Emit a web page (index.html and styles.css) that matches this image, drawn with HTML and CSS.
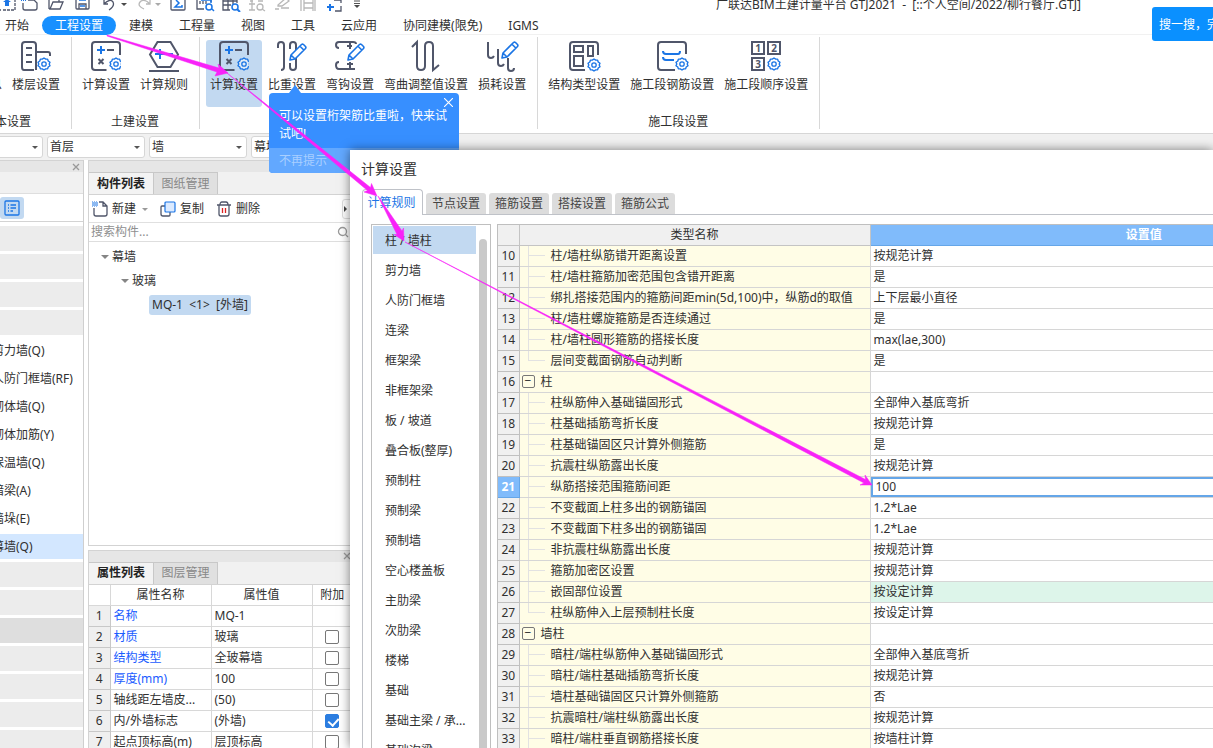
FILE: index.html
```html
<!DOCTYPE html>
<html lang="zh-CN">
<head>
<meta charset="utf-8">
<title>广联达BIM土建计量平台 GTJ2021</title>
<link rel="stylesheet" href="styles.css">
</head>
<body>
<svg class="defs" aria-hidden="true">
  <symbol id="gear" viewBox="-7 -7 14 14"><path d="M0-6 1.7-4.9 3.6-4.9 4.2-3 6-1.7 5.2 0 6 1.7 4.2 3 3.6 4.9 1.7 4.9 0 6-1.7 4.9-3.6 4.9-4.2 3-6 1.7-5.2 0-6-1.7-4.2-3-3.6-4.9-1.7-4.9Z" fill="#fff" fill-opacity=".5" stroke="#1b75e5" stroke-width="1.4" stroke-linejoin="round"/><circle r="2.2" fill="none" stroke="#1b75e5" stroke-width="1.3"/></symbol>
  <symbol id="pencil" viewBox="0 0 18 18"><path d="M1 17 2 12 12.5 1.5Q13.5.7 14.5 1.5L16.5 3.5Q17.3 4.5 16.5 5.5L6 16ZM2 12 6 16M11 3.2 14.8 7" fill="#fff" stroke="#1b75e5" stroke-width="1.6" stroke-linejoin="round"/></symbol>
  <symbol id="calc" viewBox="0 0 30 30"><path d="M15.500 29H4Q1 29 1 26V4Q1 1 4 1H26Q29 1 29 4V14" class="ink"/><path d="M6 9H14M10 5V13" class="blue"/><path d="M16 9H23M7.500 18 12.500 23M12.500 18 7.500 23" class="ink"/><use href="#gear" x="18" y="16" width="14" height="14"/></symbol>
</svg>

<header class="quickbar">
  <div class="quick-icons">
    <button class="q" aria-label="升级"><svg viewBox="0 0 26 12"><path d="M7 0V10H10M12 10H18M16 10H24V0" class="thin" stroke-dasharray="3 1"/><path d="M13 1 17 4H15V8H11V4H9Z" transform="translate(3 -2)" fill="#1b75e5"/></svg></button>
    <button class="q" aria-label="新建文件"><svg viewBox="0 0 26 12"><path d="M6 3V8Q6 10 8 10H18Q20 10 20 8V3L17 0H11" class="thin"/><path d="M4 0H9" stroke="#1b75e5" stroke-width="2" stroke-dasharray="1 1"/></svg></button>
    <button class="q" aria-label="打开"><svg viewBox="0 0 26 12"><path d="M6 9V0M7 9 10 2H20L17 9ZM16 0V2" class="thin"/></svg></button>
    <button class="q" aria-label="保存"><svg viewBox="0 0 26 12"><path d="M7 0V8Q7 9 8 9H19Q20 9 20 8V0M10 9V4H17V9" class="thin"/><path d="M10 0H17M11 6H16" stroke="#1b75e5" stroke-width="1.500"/></svg></button>
    <button class="q undo" aria-label="撤销"><svg viewBox="0 0 37 12"><path d="M9 0V4H13M9 4Q15-2 18 2Q20 6 14 10" class="thin"/><path d="M26 3H32L29 6Z" fill="#4a4a4a"/></svg></button>
    <button class="q redo" aria-label="恢复"><svg viewBox="0 0 33 12"><path d="M18 0V4H14M18 4Q12-2 8 2Q5 6 12 9" class="pale"/><path d="M23 3H29L26 6Z" fill="#aaa"/></svg></button>
    <button class="q" aria-label="汇总计算"><svg viewBox="0 0 26 12"><path d="M6 0V9Q6 10 7 10H19Q20 10 20 9V0" class="thin"/><path d="M11 0 14 3 10 7H17V5" fill="none" stroke="#1b75e5" stroke-width="1.500"/></svg></button>
    <button class="q" aria-label="查看工程量"><svg viewBox="0 0 26 12"><path d="M6 0V9H13M20 0V2M9 1V4M12 1V4M15 1V4" class="thin"/><path d="M10 0H20V3M21 9 23 11" stroke="#1b75e5" fill="none" stroke-width="1.500"/><circle cx="18" cy="7" r="3" class="lens"/></svg></button>
    <button class="q" aria-label="查看计算式"><svg viewBox="0 0 26 12"><path d="M6 0V10H13M6 1H20M6 5H14M11 0V10M16 0V4M20 0V3" class="thin"/><circle cx="18" cy="7" r="3" class="lens"/><path d="M20 9 23 12" class="blue"/></svg></button>
    <button class="q" aria-label="查看钢筋量"><svg viewBox="0 0 26 12"><path d="M6 4H12M9 0V10M6 10H12M15 1H20M7 1H10M19 9 22 11" class="pale"/><circle cx="17" cy="7" r="3" class="pale"/></svg></button>
    <button class="q" aria-label="编辑钢筋"><svg viewBox="0 0 26 12"><path d="M9 5 17-2 20 1 13 6H9ZM6 9H10M12 8H20" class="pale"/></svg></button>
    <button class="q" aria-label="三维"><svg viewBox="0 0 26 12"><path d="M6 0V11M9 0V11M18 0V11M20 0V11M9 3H18M9 8H18" class="pale"/></svg></button>
    <button class="q" aria-label="框选"><svg viewBox="0 0 26 12"><path d="M13 0H20V3M20 6V11H14" class="thin"/><path d="M6 7H13M9 4V11" class="blue"/></svg></button>
    <button class="q more" aria-label="更多"><svg viewBox="0 0 20 12"><path d="M7 1H13M7 3.500H13" stroke="#555"/><path d="M7 5H13L10 8Z" fill="#4a4a4a"/></svg></button>
  </div>
  <h1 class="app-title">广联达BIM土建计量平台 GTJ2021 &nbsp;-&nbsp; [::个人空间/2022/柳行餐厅.GTJ]</h1>
</header>

<nav class="menu">
  <button>开始</button><button class="on">工程设置</button><button>建模</button><button>工程量</button><button>视图</button><button>工具</button><button>云应用</button><button>协同建模(限免)</button><button>IGMS</button>
</nav>
<button class="search-chip">搜一搜，完成</button>

<section class="ribbon">
  <div class="group first">
    <div class="tools"><button class="tool"><svg viewBox="0 0 30 30"></svg>工程信息</button><button class="tool"><svg viewBox="0 0 30 30"><path d="M13 29H3Q1 29 1 26V4Q1 1 4 1H12Q15 1 15 4V29M15 11H27Q29 11 29 13V15M5 7H11M5 14H11M5 21H11" class="ink"/><path d="M16 16H28V30H16Z" fill="#fff"/><use href="#gear" x="16" y="16" width="14" height="14"/></svg>楼层设置</button></div>
    <div class="label">基本设置</div>
  </div>
  <div class="group">
    <div class="tools"><button class="tool"><svg viewBox="0 0 30 30"><use href="#calc"/></svg>计算设置</button><button class="tool"><svg viewBox="0 0 30 30"><path d="M8.500 1H21.500L29 13.500 21.500 26H8.500L1 13.500ZM0 30H30" class="ink"/><path d="M6 13H16M11 8V18M16 13H24" class="blue"/></svg>计算规则</button></div>
    <div class="label">土建设置</div>
  </div>
  <div class="group">
    <div class="tools"><button class="tool on"><svg viewBox="0 0 30 30"><use href="#calc"/></svg>计算设置</button><button class="tool"><svg viewBox="0 0 30 30"><path d="M1 7V4Q1 1 4 1Q7 1 7 4V26Q7 29 4 29M13 8V4Q13 1 16 1Q19 1 19 4V26Q19 29 16 29Q13 29 13 26V22" class="ink"/><use href="#pencil" x="12" y="2" width="18" height="18"/></svg>比重设置</button><button class="tool"><svg viewBox="0 0 30 30"><path d="M4 7Q1 7 1 4Q1 1 4 1H18Q21 1 21 3M15 1V8M12 5H17M4 21Q1 21 1 24Q1 28 4 28H20M15 21V28M12 23H18" class="ink"/><use href="#pencil" x="12" y="2" width="18" height="18"/></svg>弯钩设置</button><button class="tool"><svg viewBox="0 0 30 30"><path d="M1 6 6 1V25Q6 29 10 29Q14 29 14 25V5Q14 1 18 1Q22 1 22 5V29L28 24" class="ink"/></svg>弯曲调整值设置</button><button class="tool"><svg viewBox="0 0 30 30"><path d="M1 1V14Q1 17 4 17Q6 17 7 15M11 8V22Q11 25 14 25Q16 25 17 23M21 17V27Q21 30 24 30Q27 30 27 27" class="ink"/><use href="#pencil" x="14" y="0" width="18" height="18"/></svg>损耗设置</button></div>
  </div>
  <div class="group">
    <div class="tools"><button class="tool"><svg viewBox="0 0 30 30"><path d="M16 29H4Q1 29 1 26V4Q1 1 4 1H26Q29 1 29 4V14M5 5H14V11H5ZM19 5H24V15H19ZM5 15H14V25H5Z" class="ink"/><use href="#gear" x="18" y="17" width="14" height="14"/></svg>结构类型设置</button><button class="tool"><svg viewBox="0 0 30 30"><path d="M18 29H4Q1 29 1 26V4Q1 1 4 1H26Q29 1 29 4V13" class="ink"/><path d="M6 10Q6 13 9 13H21Q23 13 23 10M6 16Q6 19 9 19H17" class="blue"/><use href="#gear" x="18" y="16" width="14" height="14"/></svg>施工段钢筋设置</button><button class="tool"><svg viewBox="0 0 30 30"><path d="M1 1H13V13H1ZM17 1H29V13H17ZM1 17H13V29H1Z" class="ink"/><text x="7" y="11" class="num">1</text><text x="23" y="11" class="num">2</text><text x="7" y="27" class="num">3</text><use href="#gear" x="16" y="16" width="14" height="14"/></svg>施工段顺序设置</button></div>
    <div class="label">施工段设置</div>
  </div>
</section>

<section class="combos">
  <label class="combo"><select aria-label="构件范围"><option></option></select></label>
  <label class="combo"><select aria-label="楼层"><option>首层</option></select></label>
  <label class="combo"><select aria-label="构件大类"><option>墙</option></select></label>
  <label class="combo"><select aria-label="构件类型"><option>幕墙</option></select></label>
</section>

<main class="work">
  <aside class="nav-panel">
    <div class="strip"><button class="x" aria-label="关闭"><svg viewBox="0 0 8 8"><path d="M1 1 7 7M7 1 1 7"/></svg></button></div>
    <div class="nav-head"></div>
    <div class="nav-tools"><button class="view-on" aria-label="列表视图"><svg viewBox="0 0 16 16"><rect x="1" y="1" width="14" height="14" rx="1"/><path d="M4 5H5M6.500 5H12M4 8H5M6.500 8H12M4 11H5M6.500 11H9"/></svg></button></div>
    <div class="nav-list">
      <button class="cat" aria-label="轴线"></button><button class="cat" aria-label="柱"></button><button class="cat" aria-label="墙"></button><button class="cat" aria-label="墙体"></button>
      <button>剪力墙(Q)</button><button>人防门框墙(RF)</button><button>砌体墙(Q)</button><button>砌体加筋(Y)</button><button>保温墙(Q)</button><button>暗梁(A)</button><button>墙垛(E)</button><button class="on">幕墙(Q)</button>
      <button class="cat" aria-label="门窗洞"></button><button class="cat" aria-label="梁"></button><button class="cat dark" aria-label="板"></button><button class="cat" aria-label="空心楼盖"></button><button class="cat" aria-label="楼梯"></button><button class="cat" aria-label="装修"></button><button class="cat" aria-label="土方"></button>
    </div>
  </aside>

  <div class="mid">
    <section class="panel grow">
      <div class="strip"></div>
      <div class="ptabs"><button class="on">构件列表</button><button>图纸管理</button></div>
      <div class="ptools">
        <button><svg viewBox="0 0 16 16"><path d="M2 7V13Q2 15 4 15H13Q15 15 15 13V5L11 1H7M11 1V5H15" class="thin"/><path d="M0 1H5M1 2H6M0 3H5M1 4H6M0 5H5" stroke="#1b75e5" stroke-dasharray="1 1"/></svg>新建<i class="caret"></i></button>
        <button><svg viewBox="0 0 16 16"><path d="M5 5H2Q1 5 1 6V13Q1 15 3 15H9Q10 15 10 14V11" class="thin"/><rect x="5" y="1" width="10" height="10" rx="1" fill="#dbeaff" stroke="#1b75e5" stroke-width="1.200"/></svg>复制</button>
        <button><svg viewBox="0 0 16 16"><path d="M1 4H15M4 4Q4 1 6 1H10Q12 1 12 4M3 4V13Q3 15 5 15H11Q13 15 13 13V4" class="thin"/><path d="M6.500 7V12M9.500 7V12" stroke="#d22" stroke-width="1.300"/></svg>删除</button>
        <button class="next" aria-label="更多"></button>
      </div>
      <div class="psearch"><input type="text" placeholder="搜索构件..." aria-label="搜索构件"><svg viewBox="0 0 12 12"><circle cx="5.500" cy="5.500" r="4"/><path d="M8.500 8.500 11 11"/></svg></div>
      <ul class="tree">
        <li><i class="tri"></i>幕墙</li>
        <li class="l2"><i class="tri"></i>玻璃</li>
        <li class="l3"><span>MQ-1 &nbsp;&lt;1&gt; &nbsp;[外墙]</span></li>
      </ul>
    </section>
    <section class="panel">
      <div class="strip"><button class="x" aria-label="关闭"><svg viewBox="0 0 8 8"><path d="M1 1 7 7M7 1 1 7"/></svg></button></div>
      <div class="ptabs"><button class="on">属性列表</button><button>图层管理</button></div>
      <table class="props">
        <colgroup><col class="c-num"><col class="c-prop"><col class="c-prop"><col></colgroup>
        <tr><th></th><th>属性名称</th><th>属性值</th><th>附加</th></tr>
        <tr><td>1</td><td class="link">名称</td><td>MQ-1</td><td></td></tr>
        <tr><td>2</td><td class="link">材质</td><td>玻璃</td><td><input type="checkbox" aria-label="附加材质"></td></tr>
        <tr><td>3</td><td class="link">结构类型</td><td>全玻幕墙</td><td><input type="checkbox" aria-label="附加结构类型"></td></tr>
        <tr><td>4</td><td class="link">厚度(mm)</td><td>100</td><td><input type="checkbox" aria-label="附加厚度"></td></tr>
        <tr><td>5</td><td>轴线距左墙皮...</td><td>(50)</td><td><input type="checkbox" aria-label="附加轴线距"></td></tr>
        <tr><td>6</td><td>内/外墙标志</td><td>(外墙)</td><td><input type="checkbox" checked aria-label="附加标志"></td></tr>
        <tr><td>7</td><td>起点顶标高(m)</td><td>层顶标高</td><td><input type="checkbox" aria-label="附加标高"></td></tr>
      </table>
    </section>
  </div>
</main>

<div class="tip" role="status">
  <button class="tip-x" aria-label="关闭提示"><svg viewBox="0 0 8 8"><path d="M0 0 8 8M8 0 0 8"/></svg></button>
  <p>可以设置桁架筋比重啦，快来试试吧!</p>
  <button class="tip-no">不再提示</button>
</div>

<section class="dialog" role="dialog" aria-label="计算设置">
  <h2>计算设置</h2>
  <div class="dtabs"><button class="on">计算规则</button><button>节点设置</button><button>箍筋设置</button><button>搭接设置</button><button>箍筋公式</button></div>
  <div class="pane">
    <div class="kinds">
      <div class="kind-list"><button class="on">柱 / 墙柱</button><button>剪力墙</button><button>人防门框墙</button><button>连梁</button><button>框架梁</button><button>非框架梁</button><button>板 / 坡道</button><button>叠合板(整厚)</button><button>预制柱</button><button>预制梁</button><button>预制墙</button><button>空心楼盖板</button><button>主肋梁</button><button>次肋梁</button><button>楼梯</button><button>基础</button><button>基础主梁 / 承...</button><button>基础次梁</button></div>
      <div class="bar"></div>
    </div>
    <div class="sheet">
      <table class="rules">
        <colgroup><col class="r-num"><col class="r-name"><col class="r-val"></colgroup>
        <tr><th></th><th>类型名称</th><th class="hot">设置值</th></tr>
        <tr><td>10</td><td>柱/墙柱纵筋错开距离设置</td><td>按规范计算</td></tr>
        <tr><td>11</td><td>柱/墙柱箍筋加密范围包含错开距离</td><td>是</td></tr>
        <tr><td>12</td><td>绑扎搭接范围内的箍筋间距min(5d,100)中，纵筋d的取值</td><td>上下层最小直径</td></tr>
        <tr><td>13</td><td>柱/墙柱螺旋箍筋是否连续通过</td><td>是</td></tr>
        <tr><td>14</td><td>柱/墙柱圆形箍筋的搭接长度</td><td>max(lae,300)</td></tr>
        <tr class="last"><td>15</td><td>层间变截面钢筋自动判断</td><td>是</td></tr>
        <tr class="head"><td>16</td><td><button aria-label="折叠">−</button>柱</td><td></td></tr>
        <tr><td>17</td><td>柱纵筋伸入基础锚固形式</td><td>全部伸入基底弯折</td></tr>
        <tr><td>18</td><td>柱基础插筋弯折长度</td><td>按规范计算</td></tr>
        <tr><td>19</td><td>柱基础锚固区只计算外侧箍筋</td><td>是</td></tr>
        <tr><td>20</td><td>抗震柱纵筋露出长度</td><td>按规范计算</td></tr>
        <tr class="edit"><td>21</td><td>纵筋搭接范围箍筋间距</td><td><input type="text" value="100" aria-label="纵筋搭接范围箍筋间距"></td></tr>
        <tr><td>22</td><td>不变截面上柱多出的钢筋锚固</td><td>1.2*Lae</td></tr>
        <tr><td>23</td><td>不变截面下柱多出的钢筋锚固</td><td>1.2*Lae</td></tr>
        <tr><td>24</td><td>非抗震柱纵筋露出长度</td><td>按规范计算</td></tr>
        <tr><td>25</td><td>箍筋加密区设置</td><td>按规范计算</td></tr>
        <tr><td>26</td><td>嵌固部位设置</td><td class="green">按设定计算</td></tr>
        <tr class="last"><td>27</td><td>柱纵筋伸入上层预制柱长度</td><td>按设定计算</td></tr>
        <tr class="head"><td>28</td><td><button aria-label="折叠">−</button>墙柱</td><td></td></tr>
        <tr><td>29</td><td>暗柱/端柱纵筋伸入基础锚固形式</td><td>全部伸入基底弯折</td></tr>
        <tr><td>30</td><td>暗柱/端柱基础插筋弯折长度</td><td>按规范计算</td></tr>
        <tr><td>31</td><td>墙柱基础锚固区只计算外侧箍筋</td><td>否</td></tr>
        <tr><td>32</td><td>抗震暗柱/端柱纵筋露出长度</td><td>按规范计算</td></tr>
        <tr><td>33</td><td>暗柱/端柱垂直钢筋搭接长度</td><td>按墙柱计算</td></tr>
      </table>
    </div>
  </div>
</section>

<svg class="arrows" width="1213" height="748" viewBox="0 0 1213 748" aria-hidden="true">
  <path d="M107 35 219 68 218 64 228 73 215 76 217 72 107 36Z"/>
  <path d="M227 73 370.500 187.500 371.500 183.500 377 196 364 192 367.500 190.500Z"/>
  <path d="M378 196 402 231 403.500 228 404 241 394 234.500 397 234.500Z"/>
  <path d="M405 242 865.500 479.500 865 475 872 485 860 485 864 483Z"/>
</svg>
</body>
</html>
```
FILE: styles.css
```css
* { box-sizing: border-box; }
body {
  margin: 0;
  height: 100vh;
  display: flex;
  flex-direction: column;
  overflow: hidden;
  position: relative;
  background: #fff;
  color: #303030;
  font: 12px/18px "Noto Sans", "Noto Sans CJK SC", sans-serif;
}
button, input, select { font: inherit; color: inherit; border: 0; padding: 0; margin: 0; background: none; }
button { white-space: nowrap; }
h1, h2, p, ul { margin: 0; padding: 0; font-weight: 400; }
table { border-collapse: collapse; table-layout: fixed; }
.defs { position: absolute; width: 0; height: 0; }
.ink { fill: none; stroke: #50566a; stroke-width: 2; }
.blue { fill: none; stroke: #1b75e5; stroke-width: 2; }
.thin { fill: none; stroke: #50566a; stroke-width: 1.3; }
.pale { fill: none; stroke: #b8b8b8; stroke-width: 1.3; }
.lens { fill: #fff; stroke: #1b75e5; stroke-width: 1.5; }
.num { font: 700 10px "Noto Sans", sans-serif; fill: #50566a; text-anchor: middle; }

.quickbar { flex: none; height: 16px; display: flex; overflow: hidden; }
.quick-icons { display: flex; flex: none; margin-left: -9px; width: 725px; }
.q { width: 26px; height: 12px; flex: none; }
.q svg { display: block; width: 100%; height: 12px; }
.undo { width: 37px; }
.redo { width: 33px; }
.more { width: 20px; }
.app-title { font-size: 12px; line-height: 10px; white-space: nowrap; }

.menu { flex: none; display: flex; height: 19px; margin-left: -8px; border-bottom: 1px solid #f1f1f1; }
.menu button { height: 19px; padding: 0 13px; line-height: 19px; }
.menu .on { background: #1890ff; color: #fff; border-radius: 10px; }
.search-chip {
  position: absolute; top: 7px; right: 0; width: 61px; height: 34px; padding: 2px 0 0 7px;
  overflow: hidden; text-align: left; color: #fff; background: #0a90ff; border-radius: 3px 0 0 3px;
}

.ribbon { flex: none; display: flex; padding-top: 2px; height: 98px; }
.group { flex: none; height: 92px; padding: 3px 7px 0 6px; border-right: 1px solid #d8d8d8; }
.group.first { margin-left: -56px; }
.tools { display: flex; gap: 2px; }
.tool { height: 67px; padding: 1px 4px 0; border-radius: 3px; line-height: 18px; display: flex; flex-direction: column; align-items: center; gap: 5px; }
.tool svg { width: 30px; height: 30px; overflow: visible; }
.tool.on { background: #c2d9f1; }
.label { text-align: center; line-height: 18px; margin-top: 6px; }

.combos { flex: none; display: flex; gap: 4px; height: 27px; padding: 2px 0; margin-left: -55px; background: #f1f1f1; border-top: 1px solid #d6d6d6; }
.combo { position: relative; width: 98px; height: 22px; }
.combo select { appearance: none; width: 100%; height: 22px; padding: 0 2px; background: #fff; border: 1px solid #d6d6d6; border-radius: 3px; }
.combo::after, .caret { content: ""; border: 3px solid transparent; border-top-color: #555; border-bottom: 0; }
.combo::after { position: absolute; right: 5px; top: 10px; }

.work { flex: 1; min-height: 0; display: flex; gap: 4px; }
.nav-panel { width: 84px; flex: none; border-right: 1px solid #cfcfcf; overflow: hidden; }
.strip { height: 12px; background: #e6e6e6; border-top: 1px solid #d3d3d3; display: flex; justify-content: flex-end; align-items: center; padding-right: 3px; flex: none; }
.x { display: flex; }
.x svg { width: 8px; height: 8px; stroke: #999; stroke-width: 1.3; }
.nav-head { height: 22px; background: #f1f1f1; border-bottom: 1px solid #dedede; }
.nav-tools { height: 28px; padding-top: 3px; border-bottom: 1px solid #d3d3d3; }
.view-on { width: 24px; height: 22px; border-radius: 3px; background: #c2d9f1; display: flex; align-items: center; justify-content: center; }
.view-on svg { width: 16px; height: 16px; fill: none; stroke: #1b75e5; stroke-width: 1.3; }
.nav-list { display: flex; flex-direction: column; gap: 3px; padding-top: 4px; }
.nav-list button { height: 25px; flex: none; text-align: left; text-indent: -8px; }
.nav-list .cat { background: #ececec; }
.nav-list .dark { background: #dedede; }
.nav-list .on { background: #d3e7ff; }

.mid { width: 268px; flex: none; display: flex; flex-direction: column; gap: 4px; margin-bottom: -5px; }
.panel { display: flex; flex-direction: column; border-left: 1px solid #d3d3d3; flex: none; }
.grow { flex: 1; min-height: 0; border-bottom: 1px solid #d3d3d3; }
.mid .strip { padding-right: 5px; }
.ptabs { flex: none; display: flex; height: 23px; background: #f1f1f1; border-bottom: 1px solid #d3d3d3; }
.ptabs button { width: 65px; height: 22px; background: #e0e0e0; color: #888; border: 1px solid #c8c8c8; border-bottom: 0; }
.ptabs .on { width: 64px; background: #f3f3f3; color: #222; font-weight: 700; border-left: 0; border-right: 0; }
.ptools { flex: none; height: 28px; display: flex; align-items: center; padding: 1px 0 0 3px; gap: 12px; border-bottom: 1px solid #e0e0e0; }
.ptools button { display: flex; align-items: center; gap: 4px; }
.ptools svg { width: 16px; height: 16px; }
.caret { border-top-color: #999; margin-left: 2px; }
.ptools .next { width: 14px; height: 20px; margin-left: auto; border: 1px solid #ddd; border-radius: 3px; }
.next::before { content: ""; border: 3px solid transparent; border-left-color: #444; border-right: 0; margin-left: 1px; }
.psearch { flex: none; display: flex; height: 19px; align-items: center; border-bottom: 1px solid #dedede; padding: 0 7px 0 2px; }
.psearch input { flex: 1; min-width: 0; height: 18px; outline: 0; }
.psearch input::placeholder { color: #8f8f8f; opacity: 1; }
.psearch svg { width: 12px; height: 12px; fill: none; stroke: #999; stroke-width: 1.3; }
.tree { list-style: none; padding: 3px 0 0 12px; }
.tree li { height: 24px; display: flex; align-items: center; gap: 3px; }
.tree .l2 { padding-left: 20px; }
.tree .l3 { padding-left: 48px; }
.tree span { background: #c2d9f1; border-radius: 3px; padding: 1px 3px; white-space: nowrap; }
.tri { border: 4px solid transparent; border-top: 4px solid #858585; border-bottom: 0; }

.props { width: 264px; }
.c-num { width: 21px; }
.c-prop { width: 101px; }
.props th, .props td { height: 21px; padding: 0 3px; line-height: 18px; border: 1px solid #d8d8d8; border-left: 0; border-top: 0; font-weight: 400; text-align: left; white-space: nowrap; overflow: hidden; }
.props th { text-align: center; }
.props td:first-child { background: #efefef; text-align: center; border-color: #c8c8c8; padding: 0; }
.props .link { color: #1a5cff; }
.props td:last-child, .props th:last-child { text-align: center; padding: 0; }
.props input { appearance: none; display: block; position: relative; width: 14px; height: 14px; margin: 0 auto; background: #fff; border: 1px solid #777; border-radius: 2px; }
.props input:checked { background: #2b7de0; border-color: #2b7de0; }
.props input:checked::after { content: ""; position: absolute; left: 4px; top: 1px; width: 5px; height: 8px; border: solid #fff; border-width: 0 2px 2px 0; transform: rotate(42deg); }

.tip { position: absolute; left: 269px; top: 93px; width: 190px; height: 80px; border-radius: 4px; background: #378fff; color: #fff; display: flex; flex-direction: column; justify-content: space-between; }
.tip::before { content: ""; position: absolute; left: 20px; top: -8px; border: 6px solid transparent; border-top: 0; border-bottom: 8px solid #378fff; }
.tip p { padding: 14px 8px 0 10px; }
.tip-x { position: absolute; right: 6px; top: 5px; display: flex; }
.tip-x svg { width: 9px; height: 9px; stroke: #fff; }
.tip-no { height: 25px; padding-left: 10px; text-align: left; color: #a9cfff; background: #62a8ff; border-radius: 0 0 4px 4px; }

.dialog { position: absolute; left: 350px; top: 150px; right: 0; bottom: 0; background: #fff; box-shadow: 0 0 10px rgba(0, 0, 0, .5); display: flex; flex-direction: column; overflow: hidden; }
.dialog h2 { font-size: 14px; line-height: 20px; padding: 9px 11px 10px; flex: none; }
.dtabs { flex: none; display: flex; align-items: flex-end; gap: 3px; height: 26px; padding-left: 12px; position: relative; }
.dtabs::after { content: ""; position: absolute; left: 72px; right: 0; bottom: 0; height: 1px; background: #bfc2c8; }
.dtabs button { width: 60px; height: 22px; background: #dcdcdc; border-radius: 3px 3px 0 0; color: #444; }
.dtabs .on { width: 61px; height: 26px; background: #fff; color: #1b75e5; border: 1px solid #bfc2c8; border-bottom: 0; border-radius: 4px 4px 0 0; padding: 1px 2px 0 0; }
.pane { flex: 1; min-height: 0; display: flex; gap: 6px; margin-left: 12px; padding: 9px 0 0 8px; border-left: 1px solid #bfc2c8; }
.kinds { flex: none; width: 120px; display: flex; justify-content: space-between; border: 1px solid #bfbfbf; border-bottom: 0; padding: 1px 3px 0 1px; overflow: hidden; }
.kind-list { width: 103px; display: flex; flex-direction: column; gap: 2px; }
.kind-list button { flex: none; height: 28px; text-align: left; padding: 2px 0 0 12px; }
.kind-list .on { background: #c2d9f1; }
.bar { width: 8px; margin-top: 13px; background: #c9c9c9; border-radius: 4px 4px 0 0; }
.sheet { flex: 1; min-width: 0; overflow: hidden; border: 1px solid #bfbfbf; border-width: 1px 0 0 1px; }
.rules { width: 920px; }
.r-num { width: 21px; }
.r-name { width: 351px; }
.rules th { height: 20px; padding: 1px 0 0; font-weight: 400; line-height: 18px; background: #f0f0f0; border: 1px solid #c4c4c4; border-top: 0; border-left: 0; }
.rules .hot { background: #80bbfb; color: #fff; font-weight: 700; border-color: #65a6e8; }
.rules td { height: 21px; padding: 0 3px; line-height: 18px; white-space: nowrap; border: 1px solid #d6d6d6; border-top: 0; border-left: 0; }
.rules td:first-child { background: #f0f0f0; text-align: center; padding: 0; border-color: #c0c0c0; }
.rules td:nth-child(2) {
  padding-left: 31px;
  background: linear-gradient(#e2e2e2, #e2e2e2) 8px 0 / 1px 100% no-repeat, linear-gradient(#e2e2e2, #e2e2e2) 9px 9px / 16px 1px no-repeat, #fffde6;
}
.rules .last td:nth-child(2) { background-size: 1px 10px, 16px 1px, auto; }
.rules .head td:nth-child(2) { padding-left: 2px; background: #fffde6; }
.head button { width: 13px; height: 13px; line-height: 10px; border: 1px solid #777; border-radius: 2px; margin-right: 6px; vertical-align: middle; margin-bottom: 2px; overflow: hidden; }
.rules .edit td:first-child { background: #80bbfb; color: #fff; font-weight: 700; border-color: #65a6e8; }
.rules .edit td:last-child { padding: 0; }
.edit input { display: block; width: 100%; height: 20px; padding: 0 3px 1px; border: 2px solid #65a6e8; outline: 0; background: #fff; }
.rules .green { background: #ddf5ea; }

.arrows { position: absolute; left: 0; top: 0; pointer-events: none; fill: #f822f8; stroke: #f822f8; stroke-width: .5; }
```
